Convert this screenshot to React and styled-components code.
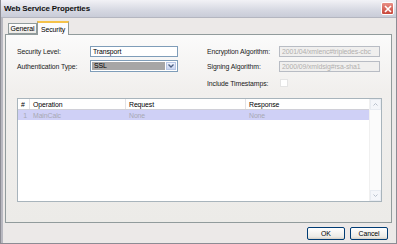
import React from 'react';
import styled, { createGlobalStyle } from 'styled-components';

const GlobalStyle = createGlobalStyle`
  html, body { margin: 0; padding: 0; background: #fff; }
  * { box-sizing: border-box; }
`;

const rows = [{ id: 1, operation: 'MainCalc', request: 'None', response: 'None' }];

const App = () => {
    return (
        <Window>
            <GlobalStyle />
            <TitleBar>
                <Title>Web Service Properties</Title>
                <CloseButton>
                    <svg width="8" height="8" viewBox="0 0 8 8">
                        <path d="M1 1L7 7M7 1L1 7" stroke="#fff" strokeWidth="1.6" />
                    </svg>
                </CloseButton>
            </TitleBar>
            <Body>
                <Tabs>
                    <Tab>General</Tab>
                    <Tab active>Security</Tab>
                </Tabs>
                <Panel>
                    <Form>
                        <Column>
                            <Row>
                                <Label width={73}>Security Level:</Label>
                                <TextBox width={88}>Transport</TextBox>
                            </Row>
                            <Row>
                                <Label width={73}>Authentication Type:</Label>
                                <Select>
                                    <SelectValue>SSL</SelectValue>
                                    <DropButton>
                                        <svg width="6" height="4" viewBox="0 0 6 4">
                                            <path d="M0.5 0.5L3 3L5.5 0.5" stroke="#4d6185" strokeWidth="1.3" fill="none" />
                                        </svg>
                                    </DropButton>
                                </Select>
                            </Row>
                        </Column>
                        <Column>
                            <Row>
                                <Label width={72}>Encryption Algorithm:</Label>
                                <TextBox width={101} disabled>2001/04/xmlenc#tripledes-cbc</TextBox>
                            </Row>
                            <Row>
                                <Label width={72}>Signing Algorithm:</Label>
                                <TextBox width={101} disabled>2000/09/xmldsig#rsa-sha1</TextBox>
                            </Row>
                            <Row tall>
                                <Label width={73}>Include Timestamps:</Label>
                                <CheckBox />
                            </Row>
                        </Column>
                    </Form>
                    <Grid>
                        <GridBody>
                            <HeaderRow>
                                <HeadCell width={12}>#</HeadCell>
                                <HeadCell width={96}>Operation</HeadCell>
                                <HeadCell width={120}>Request</HeadCell>
                                <HeadCell width={120} last>Response</HeadCell>
                            </HeaderRow>
                            {rows.map((r) => (
                                <DataRow key={r.id}>
                                    <Cell width={12} align="right">{r.id}</Cell>
                                    <Cell width={96}>{r.operation}</Cell>
                                    <Cell width={120}>{r.request}</Cell>
                                    <Cell width={120}>{r.response}</Cell>
                                </DataRow>
                            ))}
                        </GridBody>
                        <ScrollBar>
                            <ScrollArrow>
                                <svg width="5" height="3" viewBox="0 0 5 3"><path d="M0.5 2.5L2.5 0.5L4.5 2.5" stroke="#b8c0cc" fill="none" /></svg>
                            </ScrollArrow>
                            <ScrollArrow>
                                <svg width="5" height="3" viewBox="0 0 5 3"><path d="M0.5 0.5L2.5 2.5L4.5 0.5" stroke="#b8c0cc" fill="none" /></svg>
                            </ScrollArrow>
                        </ScrollBar>
                    </Grid>
                </Panel>
                <Buttons>
                    <Button>OK</Button>
                    <Button>Cancel</Button>
                </Buttons>
            </Body>
        </Window>
    );
};

export default App;

const Window = styled.div`
    width: 397px;
    height: 244px;
    background: #ece9e8;
    border: 1px solid #8c8c94;
    border-top: none;
    display: flex;
    flex-direction: column;
    font-family: "Liberation Sans", Arial, sans-serif;
    font-size: 6.9px;
    letter-spacing: -0.1px;
    color: #000;
    overflow: hidden;
`;

const TitleBar = styled.div`
    height: 18px;
    display: flex;
    align-items: center;
    justify-content: space-between;
    padding: 0 2px 0 3px;
    background: linear-gradient(#f2f2f6, #d6d8e2 60%, #c9ccd8);
    border-bottom: 1px solid #b4b6c0;
`;

const Title = styled.div`
    font-weight: bold;
    font-size: 8px;
    letter-spacing: -0.15px;
    color: #101010;
`;

const CloseButton = styled.div`
    width: 13px;
    height: 13px;
    border: 1px solid #fff;
    border-radius: 2px;
    background: linear-gradient(#e88f86, #c8463a);
    display: flex;
    align-items: center;
    justify-content: center;
`;

const Body = styled.div`
    flex: 1;
    display: flex;
    flex-direction: column;
    padding: 2px 4px 0 2px;
    border-left: 2px solid #b8b8c0;
`;

const Tabs = styled.div`
    display: flex;
    align-items: flex-end;
    padding-left: 3px;
    height: 14px;
`;

const Tab = styled.div`
    height: ${(p) => (p.active ? '14px' : '11px')};
    width: ${(p) => (p.active ? '32px' : '29px')};
    display: flex;
    align-items: center;
    justify-content: center;
    background: ${(p) => (p.active ? '#fcfcfe' : 'linear-gradient(#fefefe, #eceae6)')};
    border: 1px solid #919b9c;
    border-bottom: ${(p) => (p.active ? 'none' : '1px solid #919b9c')};
    border-top: ${(p) => (p.active ? '2px solid #f5c24a' : '1px solid #919b9c')};
    margin-bottom: ${(p) => (p.active ? '-1px' : '0')};
    position: relative;
    z-index: ${(p) => (p.active ? 1 : 0)};
`;

const Panel = styled.div`
    height: 189px;
    border: 1px solid #919b9c;
    background: linear-gradient(#fbfbfb, #f1efed 30%, #ecebe8);
    padding: 10px 10px 0 11px;
    display: flex;
    flex-direction: column;
`;

const Form = styled.div`
    display: flex;
    gap: 29px;
    height: 53px;
`;

const Column = styled.div`
    display: flex;
    flex-direction: column;
    gap: 3px;
`;

const Row = styled.div`
    display: flex;
    align-items: center;
    height: ${(p) => (p.tall ? '16px' : '12px')};
`;

const Label = styled.div`
    width: ${(p) => p.width}px;
    color: #1a1a1a;
    white-space: nowrap;
`;

const TextBox = styled.div`
    width: ${(p) => p.width}px;
    height: 11px;
    border: 1px solid ${(p) => (p.disabled ? '#b8bcc4' : '#7f9db9')};
    background: ${(p) => (p.disabled ? '#f0efee' : '#fff')};
    color: ${(p) => (p.disabled ? '#b2b0ae' : '#000')};
    padding-left: 2px;
    line-height: 9px;
    white-space: nowrap;
    overflow: hidden;
`;

const Select = styled.div`
    width: 88px;
    height: 12px;
    border: 1px solid #7f9db9;
    background: #fff;
    display: flex;
    padding: 1px;
`;

const SelectValue = styled.div`
    flex: 1;
    background: #a7a6a6;
    color: #000;
    padding-left: 2px;
    line-height: 8px;
`;

const DropButton = styled.div`
    width: 10px;
    margin-left: 1px;
    background: linear-gradient(#eef2fc, #c8d4f0);
    border: 1px solid #b8c6e4;
    display: flex;
    align-items: center;
    justify-content: center;
`;

const CheckBox = styled.div`
    width: 8px;
    height: 8px;
    background: #fff;
    border: 1px solid #e4e4e4;
`;

const Grid = styled.div`
    width: 365px;
    height: 104px;
    border: 1px solid #a8b4bc;
    background: #fff;
    display: flex;
`;

const GridBody = styled.div`
    flex: 1;
    display: flex;
    flex-direction: column;
`;

const HeaderRow = styled.div`
    display: flex;
    height: 11px;
    border-bottom: 1px solid #d0d0d8;
    color: #000;
`;

const Cell = styled.div`
    width: ${(p) => p.width}px;
    padding: 0 3px;
    text-align: ${(p) => p.align || 'left'};
    white-space: nowrap;
`;

const HeadCell = styled(Cell)`
    display: flex;
    align-items: center;
    border-right: ${(p) => (p.last ? 'none' : '1px solid #e2e2e6')};
`;

const DataRow = styled.div`
    display: flex;
    height: 10px;
    background: #cfd0f6;
    color: #a8a8b4;
    align-items: center;
`;

const ScrollBar = styled.div`
    width: 12px;
    background: #fbfbfb;
    border-left: 1px solid #f0f0f0;
    display: flex;
    flex-direction: column;
    justify-content: space-between;
`;

const ScrollArrow = styled.div`
    height: 11px;
    border: 1px solid #e8ecf2;
    background: #f4f6fa;
    display: flex;
    align-items: center;
    justify-content: center;
`;

const Buttons = styled.div`
    display: flex;
    justify-content: flex-end;
    gap: 5px;
    padding: 4px 4px 0 0;
`;

const Button = styled.div`
    width: 38px;
    height: 13px;
    border: 1px solid #003c74;
    border-radius: 2px;
    background: linear-gradient(#ffffff, #ecebe6 80%, #d6d0c5);
    display: flex;
    align-items: center;
    justify-content: center;
    color: #000;
`;
